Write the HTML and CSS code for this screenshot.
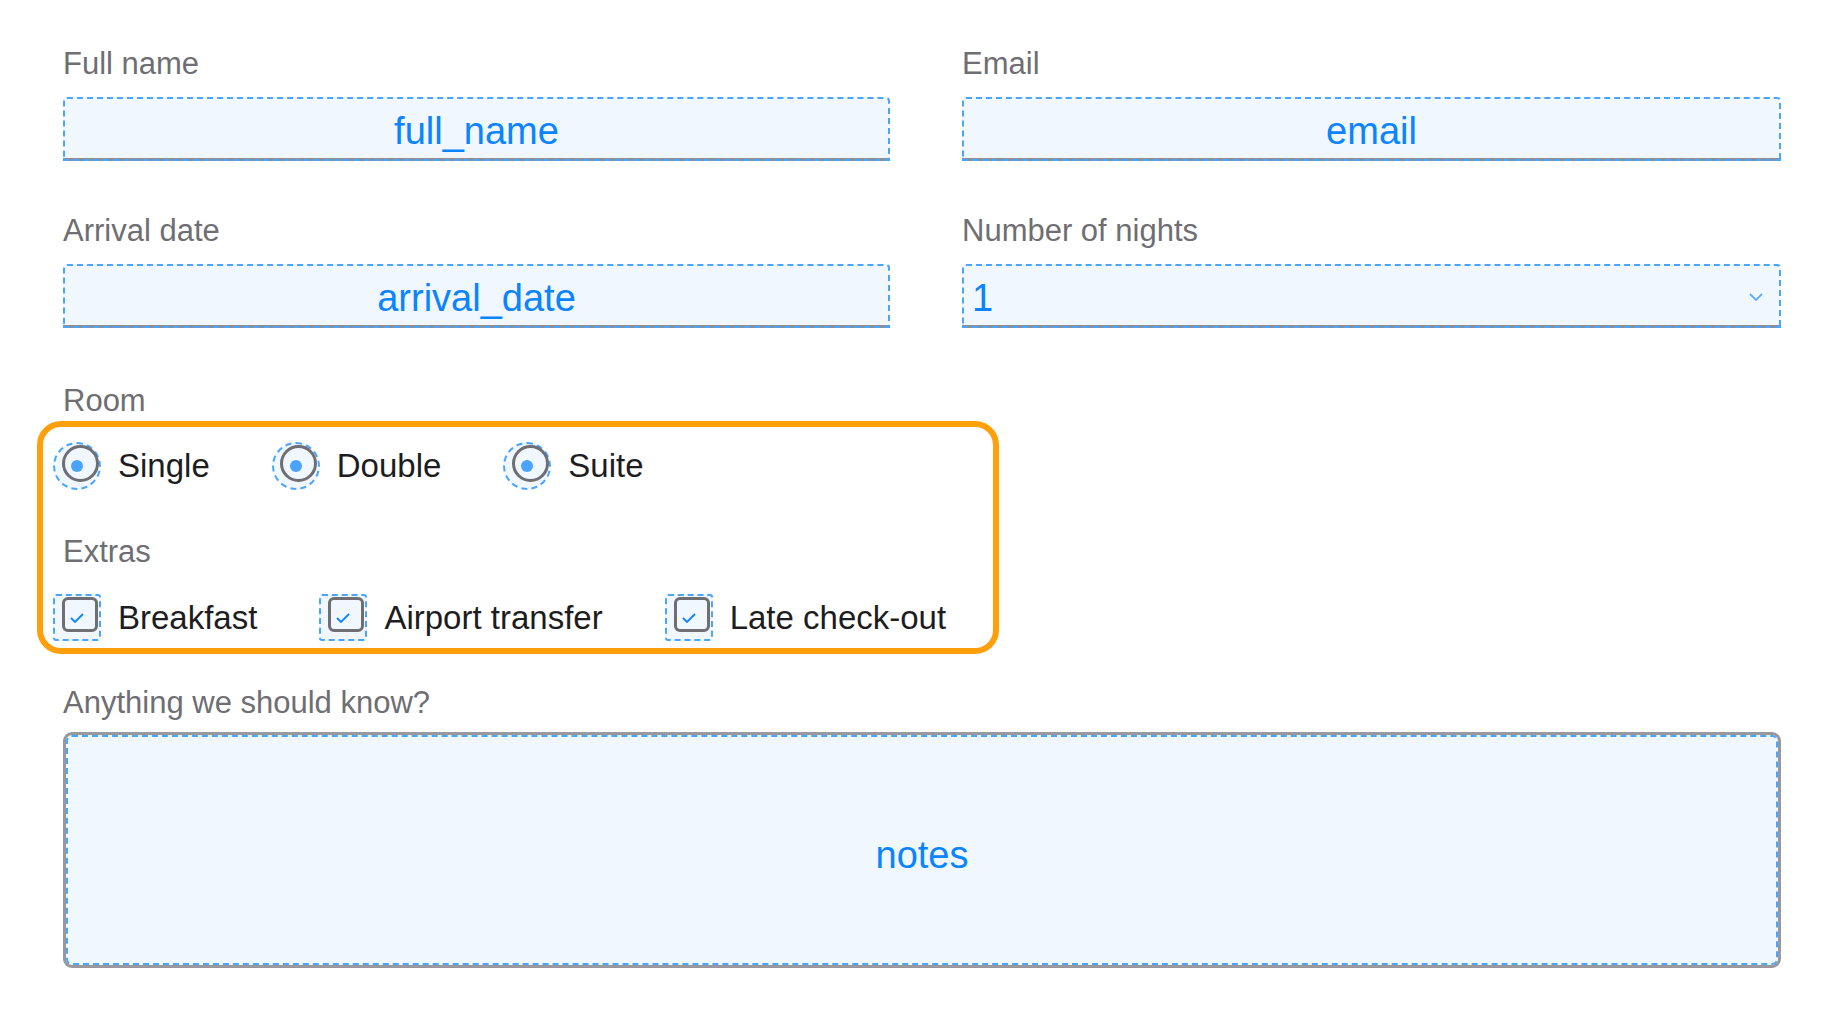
FILE: index.html
```html
<!DOCTYPE html>
<html lang="en">
<head>
    <meta charset="UTF-8">
    <title>Booking</title>
    <link rel="stylesheet" href="styles.css">
</head>
<body>
<form class="booking">
    <div class="row">
        <div>
            <label class="caption" for="full_name">Full name</label>
            <input class="field" id="full_name" type="text" value="full_name">
        </div>
        <div>
            <label class="caption" for="email">Email</label>
            <input class="field" id="email" type="text" value="email">
        </div>
    </div>

    <div class="row">
        <div>
            <label class="caption" for="arrival_date">Arrival date</label>
            <input class="field" id="arrival_date" type="text" value="arrival_date">
        </div>
        <div>
            <label class="caption" for="nights">Number of nights</label>
            <div class="select-wrap">
                <select class="field select" id="nights">
                    <option>1</option>
                    <option>2</option>
                    <option>3</option>
                    <option>4</option>
                    <option>5</option>
                </select>
                <svg class="chevron" viewBox="0 0 14 9"><polyline points="1,1 7,7 13,1" fill="none" stroke="#5aaeff" stroke-width="1.8"/></svg>
            </div>
        </div>
    </div>

    <div class="caption room-caption">Room</div>
    <div class="highlight">
        <div class="options">
            <div class="choice">
                <span class="mark radio"><span class="ring"></span><span class="dot"></span></span>
                Single
            </div>
            <div class="choice">
                <span class="mark radio"><span class="ring"></span><span class="dot"></span></span>
                Double
            </div>
            <div class="choice">
                <span class="mark radio"><span class="ring"></span><span class="dot"></span></span>
                Suite
            </div>
        </div>

        <div class="caption extras">Extras</div>
        <div class="options">
            <div class="choice">
                <span class="mark box"><span class="square"></span><svg class="tick" viewBox="0 0 14 10"><polyline points="1,5 5,9 13,1" fill="none" stroke="#0a84ff" stroke-width="1.8"/></svg></span>
                Breakfast
            </div>
            <div class="choice">
                <span class="mark box"><span class="square"></span><svg class="tick" viewBox="0 0 14 10"><polyline points="1,5 5,9 13,1" fill="none" stroke="#0a84ff" stroke-width="1.8"/></svg></span>
                Airport transfer
            </div>
            <div class="choice">
                <span class="mark box"><span class="square"></span><svg class="tick" viewBox="0 0 14 10"><polyline points="1,5 5,9 13,1" fill="none" stroke="#0a84ff" stroke-width="1.8"/></svg></span>
                Late check-out
            </div>
        </div>
    </div>

    <label class="caption notes-caption" for="notes">Anything we should know?</label>
    <textarea class="notes" id="notes">notes</textarea>
</form>
</body>
</html>
```

FILE: styles.css
```css
body {
    margin: 0;
    background: #fff;
    font-family: "Liberation Sans", Arial, sans-serif;
}

.booking {
    padding: 46px 59px 0 63px;
}

.row {
    display: grid;
    grid-template-columns: 827px 1fr;
    column-gap: 72px;
}
.row + .row {
    margin-top: 52px;
}

.caption {
    display: block;
    font-size: 31px;
    line-height: 36px;
    color: #6e6e73;
    margin-bottom: 15px;
}

/* text inputs + select share the same look */
.field {
    display: block;
    width: 100%;
    height: 64px;
    box-sizing: border-box;
    margin: 0;
    padding: 7px 13px 0;
    font: 38px "Liberation Sans", Arial, sans-serif;
    color: #0a84ff;
    text-align: center;
    background: #f0f7ff;
    border: 0;
    border-bottom: 3px solid #8e8e93;
    border-radius: 4px 4px 0 0;
    outline: 2px dashed #4aa5ff;
    outline-offset: -2px;
}

.select-wrap {
    position: relative;
}
.select {
    -webkit-appearance: none;
    appearance: none;
    padding-left: 10px;
    text-align: left;
}
.chevron {
    position: absolute;
    right: 18px;
    top: 29px;
    width: 14px;
    height: 9px;
    pointer-events: none;
}

.room-caption {
    margin-top: 55px;
    margin-bottom: 2px;
}

.highlight {
    width: 962px;
    box-sizing: border-box;
    margin-left: -26px;
    padding: 15px 0 7px 10px;
    border: 6px solid #ff9f0a;
    border-radius: 24px;
}

.options {
    display: flex;
    align-items: center;
    gap: 62px;
}

.choice {
    display: flex;
    align-items: center;
    gap: 17px;
    font-size: 33px;
    color: #1d1d1f;
}

.mark {
    display: grid;
    place-items: center;
    flex: none;
    width: 48px;
    height: 48px;
    box-sizing: border-box;
    border: 2px dashed #4aa5ff;
    background: #f0f7ff;
}
.mark > * {
    grid-area: 1 / 1;
}

.radio {
    border-radius: 50%;
}
.ring {
    width: 37px;
    height: 37px;
    box-sizing: border-box;
    margin: 0 0 6px 6px;
    border: 3px solid #6e6e73;
    border-radius: 50%;
}
.dot {
    width: 12px;
    height: 12px;
    border-radius: 50%;
    background: #4aa3ff;
}

.box {
    height: 47px;
    border-radius: 3px;
}
.square {
    width: 36px;
    height: 35px;
    box-sizing: border-box;
    margin: 0 0 6px 6px;
    border: 3px solid #6e6e73;
    border-radius: 6px;
}
.tick {
    width: 14px;
    height: 10px;
}

.extras {
    margin: 44px 0 24px 10px;
}

.notes-caption {
    margin-top: 31px;
    margin-bottom: 11px;
}

.notes {
    display: block;
    width: 100%;
    height: 236px;
    box-sizing: border-box;
    margin: 0;
    padding: 98px 0 0;
    font: 38px/44px "Liberation Sans", Arial, sans-serif;
    color: #0a84ff;
    text-align: center;
    background: #f0f7ff;
    border: 3px solid #98989d;
    border-radius: 9px;
    outline: 2px dashed #4aa5ff;
    outline-offset: -5px;
    resize: none;
}
```
